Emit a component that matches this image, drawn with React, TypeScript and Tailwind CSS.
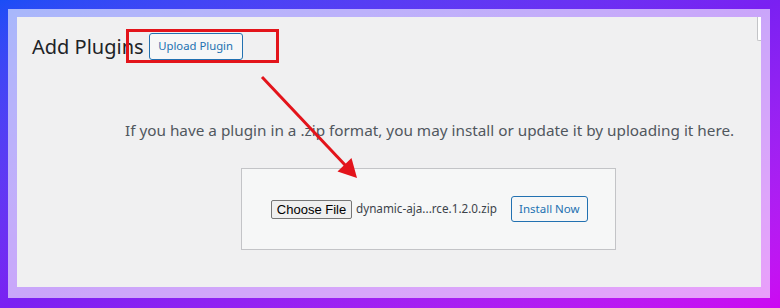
export default function App() {
  return (
    <div className="w-[780px] h-[308px] bg-linear-to-br from-[#1a4df6] via-[#7a20f2] to-[#cc08f2] pt-[9px] pl-[8px] pr-[10px] pb-[10px] font-['Noto_Sans',sans-serif]">
      <div className="h-full bg-white/60 pt-[8px] pl-[9px] pr-[9px] pb-[11px]">
        <div className="relative h-full bg-[#f0f0f1] pl-[15px] pt-[16px]">
          {/* header */}
          <div className="flex items-center gap-[5px] h-[27px]">
            <h1 className="text-[20px] leading-none text-[#1d2327] font-normal whitespace-nowrap">Add Plugins</h1>
            <button className="w-[94px] h-[27px] text-[11.3px] text-[#2271b1] border border-[#2271b1] rounded-[3px] bg-[#f6f7f7] whitespace-nowrap">
              Upload Plugin
            </button>
          </div>

          <p className="mt-[58px] pl-[93px] text-[15.3px] leading-[24px] text-[#50575e] whitespace-nowrap">
            If you have a plugin in a .zip format, you may install or update it by uploading it here.
          </p>

          {/* upload form */}
          <div className="mt-[26px] ml-[209px] w-[375px] h-[82px] border border-[#c3c4c7] bg-[#f6f7f7] flex items-center pl-[29px]">
            <button className="shrink-0 w-[81px] h-[19px] text-[13px] leading-none font-['Liberation_Sans',sans-serif] text-black bg-[#efefef] border border-[#767676] rounded-[2px] whitespace-nowrap">
              Choose File
            </button>
            <span className="shrink-0 ml-[4px] text-[11.7px] text-[#3c434a] whitespace-nowrap">dynamic-aja...rce.1.2.0.zip</span>
            <button className="shrink-0 ml-[14px] w-[77px] h-[26px] text-[11.5px] text-[#2271b1] border border-[#2271b1] rounded-[3px] bg-[#f6f7f7] whitespace-nowrap">
              Install Now
            </button>
          </div>

          {/* red highlight box */}
          <div className="absolute left-[109px] top-[12px] w-[153px] h-[34px] border-[3px] border-[#e3141b]" />

          {/* red arrow */}
          <svg className="absolute left-0 top-0 pointer-events-none" width="744" height="270">
            <line x1="245" y1="60" x2="329" y2="149" stroke="#e3141b" strokeWidth="3" />
            <polygon points="340,161 334.5,141 320.5,154.5" fill="#e3141b" />
          </svg>

          {/* scrollbar hint */}
          <div className="absolute right-0 top-0 w-[4px] h-[24px] bg-white border-l border-b border-[#c3c4c7] rounded-bl-[2px]" />
        </div>
      </div>
    </div>
  )
}
